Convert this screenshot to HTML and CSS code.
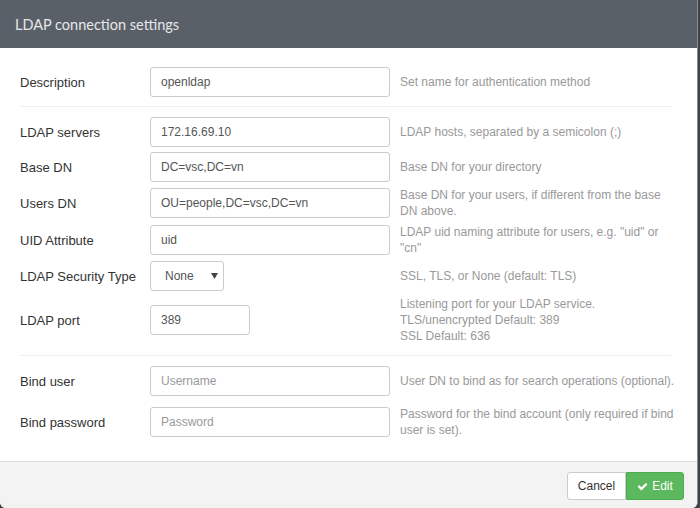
FILE: index.html
```html
<!DOCTYPE html>
<html>
<head>
<meta charset="utf-8">
<link rel="stylesheet" href="styles.css">
</head>
<body>
<div class="modal">
  <div class="modal-header"><h4 class="modal-title">LDAP connection settings</h4></div>
  <div class="modal-body">
    <div class="group">
      <div class="row">
        <label class="label">Description</label>
        <input class="input" type="text" value="openldap">
        <div class="help">Set name for authentication method</div>
      </div>
    </div>
    <hr class="sep">
    <div class="group">
      <div class="row">
        <label class="label">LDAP servers</label>
        <input class="input" type="text" value="172.16.69.10">
        <div class="help">LDAP hosts, separated by a semicolon (;)</div>
      </div>
      <div class="row">
        <label class="label">Base DN</label>
        <input class="input" type="text" value="DC=vsc,DC=vn">
        <div class="help">Base DN for your directory</div>
      </div>
      <div class="row">
        <label class="label">Users DN</label>
        <input class="input" type="text" value="OU=people,DC=vsc,DC=vn">
        <div class="help">Base DN for your users, if different from the base DN above.</div>
      </div>
      <div class="row">
        <label class="label">UID Attribute</label>
        <input class="input" type="text" value="uid">
        <div class="help">LDAP uid naming attribute for users, e.g. "uid" or "cn"</div>
      </div>
      <div class="row">
        <label class="label">LDAP Security Type</label>
        <div class="select-wrap">
          <select class="select"><option>None</option><option>SSL</option><option>TLS</option></select>
          <svg class="caret" width="7" height="6" viewBox="0 0 7 6"><path d="M0 0H7L3.5 6Z" fill="#444"/></svg>
        </div>
        <div class="help">SSL, TLS, or None (default: TLS)</div>
      </div>
      <div class="row">
        <label class="label">LDAP port</label>
        <input class="input input-port" type="text" value="389">
        <div class="help">Listening port for your LDAP service.<br>TLS/unencrypted Default: 389<br>SSL Default: 636</div>
      </div>
    </div>
    <hr class="sep sep2">
    <div class="group group-bind">
      <div class="row">
        <label class="label">Bind user</label>
        <input class="input" type="text" placeholder="Username">
        <div class="help">User DN to bind as for search operations (optional).</div>
      </div>
      <div class="row">
        <label class="label">Bind password</label>
        <input class="input" type="password" placeholder="Password">
        <div class="help">Password for the bind account (only required if bind user is set).</div>
      </div>
    </div>
  </div>
  <div class="modal-footer">
    <div class="btn-group">
      <button class="btn btn-default">Cancel</button>
      <button class="btn btn-success"><svg class="check" width="11" height="11" viewBox="0 0 1792 1792"><path fill="#fff" d="M1671 566q0 40-28 68l-724 724-136 136q-28 28-68 28t-68-28l-136-136-362-362q-28-28-28-68t28-68l136-136q28-28 68-28t68 28l294 295 656-657q28-28 68-28t68 28l136 136q28 28 28 68z"/></svg>Edit</button>
    </div>
  </div>
</div>
</body>
</html>
```

FILE: styles.css
```css
html, body {
  margin: 0;
  padding: 0;
  background: #3f4246;
  height: 508px;
  overflow: hidden;
}
.modal {
  width: 697px;
  height: 508px;
  background: #fff;
  border-right: 1px solid #8a8d91;
  border-radius: 0 0 6px 6px;
  display: flex;
  flex-direction: column;
  overflow: hidden;
  font-family: "Liberation Sans", Arial, sans-serif;
}
.modal-header {
  background: #5a6068;
  height: 48px;
  display: flex;
  align-items: center;
  padding: 0 15px;
  flex: none;
}
.modal-title {
  margin: 0;
  font-family: Lato, "Open Sans", sans-serif;
  font-weight: 400;
  font-size: 14.5px;
  color: #e6e7e9;
}
.modal-body {
  flex: 1;
  padding: 19px 20px 0 20px;
}
.group {
  display: flex;
  flex-direction: column;
  gap: 5px;
}
.group-bind {
  gap: 10px;
}
.row {
  display: flex;
  align-items: center;
}
.label {
  width: 130px;
  flex: none;
  font-size: 13px;
  color: #333;
}
.input {
  box-sizing: border-box;
  width: 240px;
  height: 30px;
  flex: none;
  margin: 0;
  border: 1px solid #ccc;
  border-radius: 3px;
  padding: 0 10px;
  font-family: "Liberation Sans", Arial, sans-serif;
  font-size: 12px;
  color: #555;
  background: #fff;
}
.input::placeholder {
  color: #999;
}
.input-port {
  width: 100px;
  margin-right: 140px;
}
.select-wrap {
  position: relative;
  width: 74px;
  height: 30px;
  margin-right: 166px;
  flex: none;
}
.select {
  appearance: none;
  -webkit-appearance: none;
  box-sizing: border-box;
  width: 74px;
  height: 30px;
  margin: 0;
  border: 1px solid #ccc;
  border-radius: 3px;
  background: #fff;
  padding: 0 0 0 14px;
  font-family: "Liberation Sans", Arial, sans-serif;
  font-size: 12px;
  color: #555;
}
.caret {
  position: absolute;
  right: 6px;
  top: 12px;
  pointer-events: none;
}
.help {
  margin-left: 10px;
  width: 278px;
  font-size: 12px;
  line-height: 16px;
  color: #999;
}
.sep {
  border: 0;
  border-top: 1px solid #eee;
  margin: 9px 6px 10px 0;
}
.sep2 {
  margin: 11px 6px 10px 0;
}
.modal-footer {
  flex: none;
  height: 47px;
  box-sizing: border-box;
  border-top: 1px solid #ddd;
  background: #f3f3f3;
  display: flex;
  justify-content: flex-end;
  align-items: flex-start;
  padding: 10px 13px 0 0;
}
.btn-group {
  display: flex;
}
.btn {
  box-sizing: border-box;
  height: 28px;
  margin: 0;
  font-family: "Liberation Sans", Arial, sans-serif;
  font-size: 12px;
  display: flex;
  align-items: center;
  cursor: pointer;
}
.btn-default {
  width: 59px;
  justify-content: center;
  background: #fff;
  color: #333;
  border: 1px solid #ccc;
  border-radius: 3px 0 0 3px;
}
.btn-success {
  width: 58px;
  justify-content: center;
  background: #5cb85c;
  color: #fff;
  border: 1px solid #4cae4c;
  border-radius: 0 3px 3px 0;
}
.check {
  margin-right: 4px;
}
```
